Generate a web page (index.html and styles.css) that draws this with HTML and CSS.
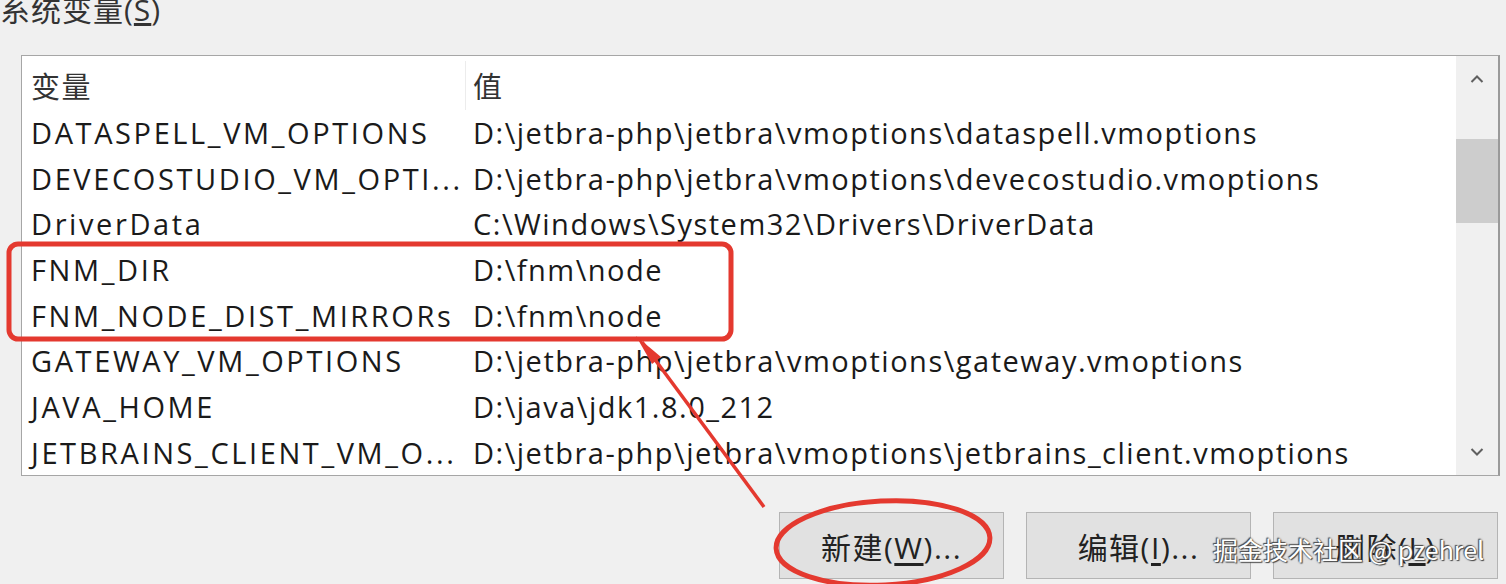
FILE: index.html
```html
<!DOCTYPE html>
<html>
<head>
  <title>系统变量</title>
  <link rel="stylesheet" href="styles.css">
</head>
<body>
  <div class="group-title">系统变量(<u>S</u>)</div>

  <div class="list-box">
    <div class="list-body">
      <div class="list-head">
        <div class="col-name">变量</div>
        <div class="col-value">值</div>
      </div>
      <div class="list-row"><div class="col-name">DATASPELL_VM_OPTIONS</div><div class="col-value">D:\jetbra-php\jetbra\vmoptions\dataspell.vmoptions</div></div>
      <div class="list-row"><div class="col-name">DEVECOSTUDIO_VM_OPTI...</div><div class="col-value">D:\jetbra-php\jetbra\vmoptions\devecostudio.vmoptions</div></div>
      <div class="list-row"><div class="col-name">DriverData</div><div class="col-value">C:\Windows\System32\Drivers\DriverData</div></div>
      <div class="list-row"><div class="col-name">FNM_DIR</div><div class="col-value">D:\fnm\node</div></div>
      <div class="list-row"><div class="col-name">FNM_NODE_DIST_MIRRORs</div><div class="col-value">D:\fnm\node</div></div>
      <div class="list-row"><div class="col-name">GATEWAY_VM_OPTIONS</div><div class="col-value">D:\jetbra-php\jetbra\vmoptions\gateway.vmoptions</div></div>
      <div class="list-row"><div class="col-name">JAVA_HOME</div><div class="col-value">D:\java\jdk1.8.0_212</div></div>
      <div class="list-row"><div class="col-name">JETBRAINS_CLIENT_VM_O...</div><div class="col-value">D:\jetbra-php\jetbra\vmoptions\jetbrains_client.vmoptions</div></div>
    </div>
    <div class="scrollbar">
      <div class="scroll-btn">
        <svg width="14" height="10" viewBox="0 0 14 10"><polyline points="1.5,8 7,2.5 12.5,8" fill="none" stroke="#606060" stroke-width="2"/></svg>
      </div>
      <div class="scroll-track">
        <div class="scroll-thumb"></div>
      </div>
      <div class="scroll-btn">
        <svg width="14" height="10" viewBox="0 0 14 10"><polyline points="1.5,2 7,7.5 12.5,2" fill="none" stroke="#606060" stroke-width="2"/></svg>
      </div>
    </div>
  </div>

  <div class="button-row">
    <button class="win-btn">新建(<u>W</u>)...</button>
    <button class="win-btn">编辑(<u>I</u>)...</button>
    <button class="win-btn">删除(<u>L</u>)</button>
  </div>

  <div class="watermark">掘金技术社区 @ pzehrel</div>

  <!-- 红色标注 -->
  <svg class="marks" width="1506" height="584" viewBox="0 0 1506 584">
    <rect x="9" y="244" width="722" height="95" rx="9" fill="none" stroke="#e4392f" stroke-width="5"/>
    <line x1="764" y1="507" x2="642" y2="342" stroke="#e4392f" stroke-width="3.5"/>
    <polygon points="636,336 661,357 652,364" fill="#e4392f"/>
    <ellipse cx="883" cy="543" rx="107" ry="42" fill="none" stroke="#e4392f" stroke-width="5" transform="rotate(-3 883 543)"/>
  </svg>
</body>
</html>
```

FILE: styles.css
```css
body {
  margin: 0;
  background-color: #f0f0f0;
  font-family: "Open Sans", "Noto Sans CJK SC", sans-serif;
  color: #1a1a1a;
  width: 1506px;
  height: 584px;
  overflow: hidden;
  position: relative;
}

.group-title {
  font-size: 30px;
  line-height: 30px;
  letter-spacing: 1px;
  margin-top: -5px;
  height: 60px;
  color: #333;
}

.list-box {
  display: flex;
  margin-left: 21px;
  width: 1479px;
  height: 421px;
  box-sizing: border-box;
  border: 1px solid #a6a6a6;
  border-right: 2px solid #9a9a9a;
  background-color: #fff;
}

.list-body {
  flex: 1;
  display: flex;
  flex-direction: column;
  overflow: hidden;
}

.list-head,
.list-row {
  display: flex;
  align-items: center;
  white-space: nowrap;
  font-size: 29px;
}

.list-head {
  height: 54px;
  padding-top: 5px;
  box-sizing: border-box;
  color: #333;
}

.list-row {
  height: 45.75px;
}

.col-name {
  width: 444px;
  padding-left: 9px;
  box-sizing: border-box;
  overflow: hidden;
  letter-spacing: 2.6px;
}

.list-head .col-name {
  border-right: 1px solid #ececec;
  height: 100%;
  display: flex;
  align-items: center;
  letter-spacing: 1.5px;
}

.col-value {
  padding-left: 7px;
  letter-spacing: 1.5px;
}

.scrollbar {
  width: 42px;
  display: flex;
  flex-direction: column;
  background-color: #f0f0f0;
}

.scroll-btn {
  height: 46px;
  display: flex;
  align-items: center;
  justify-content: center;
}

.scroll-track {
  flex: 1;
}

.scroll-thumb {
  margin-top: 37px;
  height: 84px;
  background-color: #cdcdcd;
}

.button-row {
  display: flex;
  justify-content: flex-end;
  gap: 22px;
  margin-top: 36px;
  padding-right: 8px;
}

.win-btn {
  width: 225px;
  height: 67px;
  background-color: #e1e1e1;
  border: 1px solid #b4b4b4;
  font-family: "Open Sans", "Noto Sans CJK SC", sans-serif;
  font-size: 30px;
  letter-spacing: 1.5px;
  color: #222;
  padding: 0;
}

.win-btn u {
  text-underline-offset: 4px;
}

.watermark {
  position: absolute;
  left: 1213px;
  top: 532px;
  font-family: "Noto Sans CJK SC", sans-serif;
  font-size: 25px;
  line-height: 34px;
  color: #fff;
  text-shadow: 0 0 2px #555, 1px 1px 1px #444, -1px -1px 1px #444;
  white-space: nowrap;
}

.marks {
  position: absolute;
  left: 0;
  top: 0;
  pointer-events: none;
}
```
